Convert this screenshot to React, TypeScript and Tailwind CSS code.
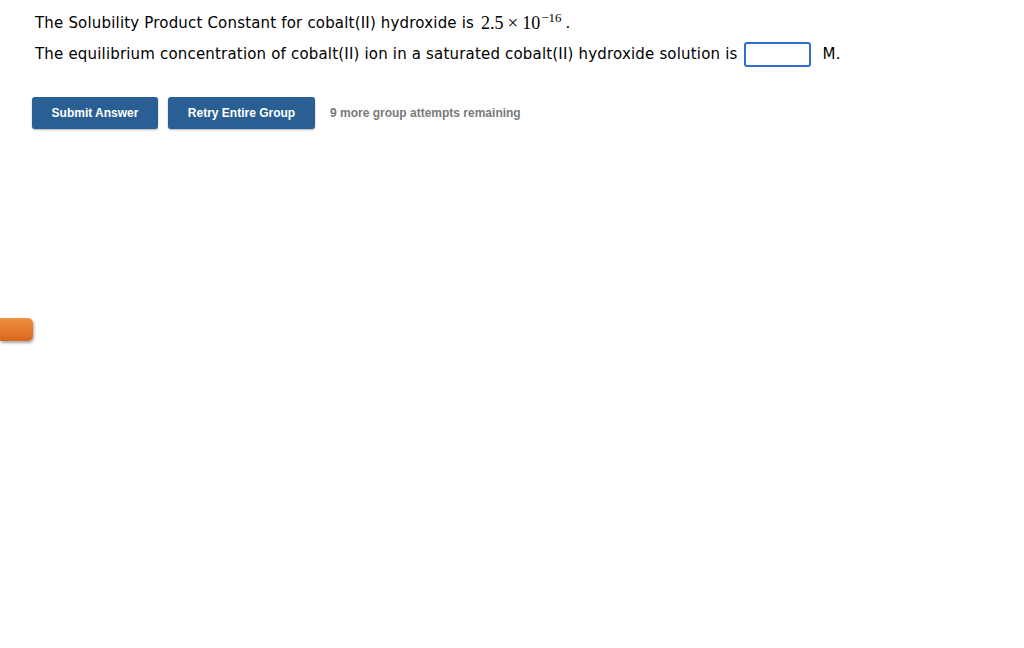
export default function App() {
  return (
    <div className="relative w-[1024px] h-[648px] bg-white overflow-hidden">
      <div className="pl-[35px] pt-[10px] text-[15px] tracking-[0.18px] text-black" style={{ fontFamily: '"DejaVu Sans", Verdana, sans-serif' }}>
        <div className="h-[26px] flex items-center">
          <span>The Solubility Product Constant for cobalt(II) hydroxide is&nbsp;</span>
          <span className="ml-[2px] text-[18px] tracking-normal" style={{ fontFamily: '"Liberation Serif", "DejaVu Serif", serif' }}>
            2.5<span className="mx-[4px] text-[19px]">×</span>10<sup className="text-[13px] ml-[1px] relative top-[-7px]">−16</sup>
          </span>
          <span className="ml-[4px]">.</span>
        </div>
        <div className="h-[30px] mt-[3px] flex items-center">
          <span>The equilibrium concentration of cobalt(II) ion in a saturated cobalt(II) hydroxide solution is</span>
          <span className="ml-[6px] inline-block w-[67px] h-[25px] border-2 border-[#2d6bcf] rounded-[3px]"></span>
          <span className="ml-[12px]">M.</span>
        </div>
        <div className="mt-[28px] ml-[-3px] flex items-center tracking-normal" style={{ fontFamily: '"Liberation Sans", Arial, sans-serif' }}>
          <button className="w-[126px] h-[32px] bg-[#2a5f94] text-white font-bold text-[12px] rounded-[3px] shadow-[0_1px_2px_rgba(0,0,0,0.3)]">Submit Answer</button>
          <button className="ml-[10px] w-[147px] h-[32px] bg-[#2a5f94] text-white font-bold text-[12px] rounded-[3px] shadow-[0_1px_2px_rgba(0,0,0,0.3)]">Retry Entire Group</button>
          <span className="ml-[15px] text-[12px] font-bold text-[#7a7a7a]">9 more group attempts remaining</span>
        </div>
      </div>
      <div className="absolute left-0 top-[318px] w-[33px] h-[23px] rounded-r-[5px] bg-gradient-to-b from-[#f09040] to-[#d9661c] shadow-[1px_2px_3px_rgba(0,0,0,0.35)]"></div>
    </div>
  );
}
